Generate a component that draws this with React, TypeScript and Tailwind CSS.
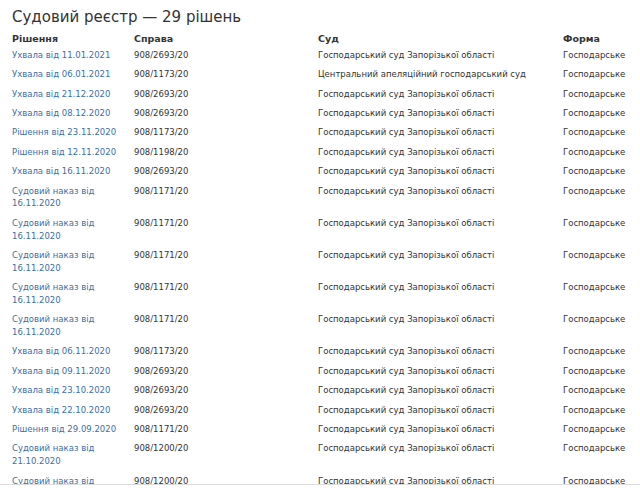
import React from 'react';

type Row = { title: string; caseNo: string; court: string; form: string };

const rows: Row[] = [
  { title: 'Ухвала від 11.01.2021', caseNo: '908/2693/20', court: 'Господарський суд Запорізької області', form: 'Господарське' },
  { title: 'Ухвала від 06.01.2021', caseNo: '908/1173/20', court: 'Центральний апеляційний господарський суд', form: 'Господарське' },
  { title: 'Ухвала від 21.12.2020', caseNo: '908/2693/20', court: 'Господарський суд Запорізької області', form: 'Господарське' },
  { title: 'Ухвала від 08.12.2020', caseNo: '908/2693/20', court: 'Господарський суд Запорізької області', form: 'Господарське' },
  { title: 'Рішення від 23.11.2020', caseNo: '908/1173/20', court: 'Господарський суд Запорізької області', form: 'Господарське' },
  { title: 'Рішення від 12.11.2020', caseNo: '908/1198/20', court: 'Господарський суд Запорізької області', form: 'Господарське' },
  { title: 'Ухвала від 16.11.2020', caseNo: '908/2693/20', court: 'Господарський суд Запорізької області', form: 'Господарське' },
  { title: 'Судовий наказ від 16.11.2020', caseNo: '908/1171/20', court: 'Господарський суд Запорізької області', form: 'Господарське' },
  { title: 'Судовий наказ від 16.11.2020', caseNo: '908/1171/20', court: 'Господарський суд Запорізької області', form: 'Господарське' },
  { title: 'Судовий наказ від 16.11.2020', caseNo: '908/1171/20', court: 'Господарський суд Запорізької області', form: 'Господарське' },
  { title: 'Судовий наказ від 16.11.2020', caseNo: '908/1171/20', court: 'Господарський суд Запорізької області', form: 'Господарське' },
  { title: 'Судовий наказ від 16.11.2020', caseNo: '908/1171/20', court: 'Господарський суд Запорізької області', form: 'Господарське' },
  { title: 'Ухвала від 06.11.2020', caseNo: '908/1173/20', court: 'Господарський суд Запорізької області', form: 'Господарське' },
  { title: 'Ухвала від 09.11.2020', caseNo: '908/2693/20', court: 'Господарський суд Запорізької області', form: 'Господарське' },
  { title: 'Ухвала від 23.10.2020', caseNo: '908/2693/20', court: 'Господарський суд Запорізької області', form: 'Господарське' },
  { title: 'Ухвала від 22.10.2020', caseNo: '908/2693/20', court: 'Господарський суд Запорізької області', form: 'Господарське' },
  { title: 'Рішення від 29.09.2020', caseNo: '908/1171/20', court: 'Господарський суд Запорізької області', form: 'Господарське' },
  { title: 'Судовий наказ від 21.10.2020', caseNo: '908/1200/20', court: 'Господарський суд Запорізької області', form: 'Господарське' },
  { title: 'Судовий наказ від 21.10.2020', caseNo: '908/1200/20', court: 'Господарський суд Запорізької області', form: 'Господарське' },
];

const App: React.FC = () => {
  return (
    <div className="h-[488px] overflow-hidden bg-white font-['DejaVu_Sans',sans-serif] text-[#333]">
      <div className="h-[485px] overflow-hidden border-b border-[#ddd] pl-3">
        <h1 className="pt-[6px] text-[15px] leading-[22px] font-normal">Судовий реєстр — 29 рішень</h1>

        <table className="mt-[3.5px] w-[628px] table-fixed border-collapse text-left text-[8.5px] leading-[12.8px]">
          <colgroup>
            <col className="w-[122px]" />
            <col className="w-[184px]" />
            <col className="w-[245px]" />
            <col className="w-[77px]" />
          </colgroup>
          <thead>
            <tr>
              <th className="pb-[1px] text-[9.5px] leading-[13px] font-bold">Рішення</th>
              <th className="pb-[1px] text-[9.5px] leading-[13px] font-bold">Справа</th>
              <th className="pb-[1px] text-[9.5px] leading-[13px] font-bold">Суд</th>
              <th className="pb-[1px] text-[9.5px] leading-[13px] font-bold">Форма</th>
            </tr>
          </thead>
          <tbody>
            {rows.map((row, i) => (
              <tr key={i} className="align-top">
                <td className="py-[3.3px] pr-1">
                  <a href="#" className="text-[#3a6fa6]">{row.title}</a>
                </td>
                <td className="py-[3.3px]">{row.caseNo}</td>
                <td className="py-[3.3px] pr-[2px]">{row.court}</td>
                <td className="py-[3.3px] whitespace-nowrap">{row.form}</td>
              </tr>
            ))}
          </tbody>
        </table>
      </div>
    </div>
  );
};

export default App;
